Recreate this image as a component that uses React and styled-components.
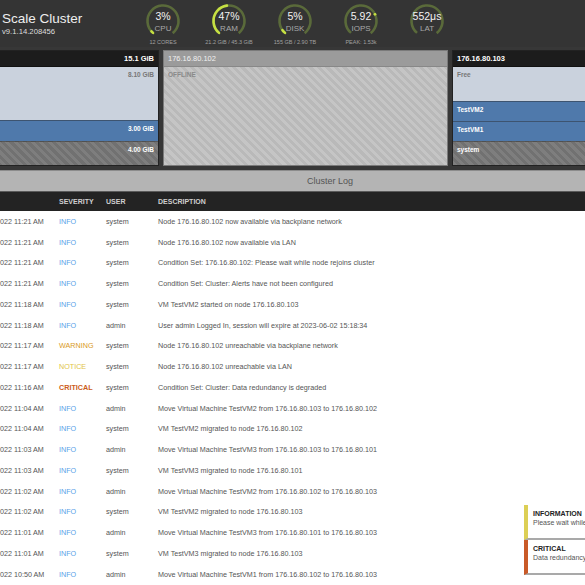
import React from "react";
import styled, { createGlobalStyle } from "styled-components";

const GlobalStyle = createGlobalStyle`
  html, body {
    margin: 0;
    padding: 0;
    overflow: hidden;
    background: #fff;
  }
  body {
    font-family: "Liberation Sans", Arial, sans-serif;
  }
`;

const Page = styled.div`
  position: relative;
  width: 585px;
  height: 585px;
  overflow: hidden;
  background: #fff;
`;

/* ---------- header ---------- */

const Header = styled.header`
  display: flex;
  align-items: flex-start;
  height: 47px;
  background: #343434;
`;

const Brand = styled.div`
  width: 130px;
  padding: 11px 0 0 2px;
  box-sizing: border-box;
`;

const Title = styled.div`
  font-size: 13.5px;
  line-height: 15px;
  color: #eee;
`;

const Version = styled.div`
  font-size: 7.7px;
  line-height: 9px;
  color: #ddd;
  margin-top: 1px;
`;

const Gauge = styled.div`
  width: 66px;
  padding-top: 3px;
  display: flex;
  flex-direction: column;
  align-items: center;
`;

const Dial = styled.div`
  position: relative;
  width: 36px;
  height: 36px;
`;

const DialText = styled.div`
  position: absolute;
  inset: 0;
  display: flex;
  flex-direction: column;
  align-items: center;
  justify-content: center;
  padding-top: 1px;
`;

const Value = styled.div`
  font-size: 10.5px;
  line-height: 11px;
  color: #f2f2f2;
`;

const Unit = styled.div`
  font-size: 8px;
  line-height: 9px;
  color: #a8a8a8;
  margin-top: 2px;
`;

const SubLabel = styled.div`
  font-size: 5.5px;
  line-height: 6px;
  color: #a0a0a0;
  white-space: nowrap;
`;

const R = 15.5;
const C = 2 * Math.PI * R;
const SWEEP = 280;
const ARC = (SWEEP / 360) * C;

const GaugeRing = ({ pct, marker }) => {
  let mx, my;
  if (marker != null) {
    const a = ((130 + marker * SWEEP) * Math.PI) / 180;
    mx = 18 + R * Math.cos(a);
    my = 18 + R * Math.sin(a);
  }
  return (
    <svg width="36" height="36" viewBox="0 0 36 36">
      <circle
        cx="18"
        cy="18"
        r={R}
        fill="none"
        stroke="#5a6a3a"
        strokeWidth="2.6"
        strokeDasharray={`${ARC} ${C}`}
        transform="rotate(130 18 18)"
      />
      {pct > 0 && (
        <circle
          cx="18"
          cy="18"
          r={R}
          fill="none"
          stroke="#c6e043"
          strokeWidth="2.6"
          strokeLinecap="round"
          strokeDasharray={`${Math.max(pct * ARC, 0.5)} ${C}`}
          transform="rotate(130 18 18)"
        />
      )}
      {marker != null && <circle cx={mx} cy={my} r="1.4" fill="#c6e043" />}
    </svg>
  );
};

const gauges = [
  { value: "3%", unit: "CPU", sub: "12 CORES", pct: 0.03 },
  { value: "47%", unit: "RAM", sub: "21.2 GiB / 45.3 GiB", pct: 0.47 },
  { value: "5%", unit: "DISK", sub: "155 GB / 2.90 TB", pct: 0.05 },
  { value: "5.92", unit: "IOPS", sub: "PEAK: 1.53k", pct: 0, marker: 0.73 },
  { value: "552μs", unit: "LAT", sub: "", pct: 0 },
];

/* ---------- nodes ---------- */

const Nodes = styled.section`
  display: flex;
  gap: 4px;
  margin-left: -129px;
  width: 870px;
  height: 123px;
  padding: 3px 3px 4px;
  box-sizing: border-box;
  background: #373737;
`;

const Node = styled.div`
  width: 285px;
  flex: none;
  display: flex;
  flex-direction: column;
  border: 1px solid ${(p) => (p.$offline ? "#7a7a7a" : "#222")};
  box-sizing: border-box;
`;

const NodeHead = styled.div`
  height: 15px;
  display: flex;
  align-items: center;
  justify-content: ${(p) => (p.$right ? "flex-end" : "flex-start")};
  padding: 0 4px;
  background: ${(p) => (p.$offline ? "#9b9b9b" : "#1c1c1c")};
  color: ${(p) => (p.$offline ? "#f0f0f0" : "#fff")};
  font-size: 7.5px;
  font-weight: ${(p) => (p.$offline ? "normal" : "bold")};
  border-bottom: 1px solid ${(p) => (p.$offline ? "#888" : "#111")};
`;

const NodeBody = styled.div`
  flex: 1;
  display: flex;
  flex-direction: column;
`;

const segColors = {
  free: { bg: "#cad2dd", fg: "#777" },
  vm: { bg: "#4f79ab", fg: "#fff" },
  system: {
    bg: "repeating-linear-gradient(45deg, #7e7e7e 0 3px, #717171 3px 6px)",
    fg: "#fff",
  },
  offline: {
    bg: "repeating-linear-gradient(45deg, #c5c5c5 0 3px, #b9b9b9 3px 6px)",
    fg: "#8a8a8a",
  },
};

const Segment = styled.div`
  height: ${(p) => p.$h}px;
  flex: ${(p) => (p.$grow ? 1 : "none")};
  box-sizing: border-box;
  background: ${(p) => segColors[p.$kind].bg};
  color: ${(p) => segColors[p.$kind].fg};
  border-top: ${(p) => (p.$first ? "none" : "1px solid rgba(40,40,40,0.45)")};
  font-size: 6.5px;
  font-weight: bold;
  padding: 4px 4px 0;
  text-align: ${(p) => (p.$right ? "right" : "left")};
`;

/* ---------- log ---------- */

const Log = styled.section`
  margin-left: -100px;
  width: 860px;
`;

const LogBar = styled.div`
  height: 22px;
  box-sizing: border-box;
  background: #b4b4b4;
  border-top: 1px solid #8c8c8c;
  border-bottom: 1px solid #5a5a5a;
  display: flex;
  align-items: center;
  justify-content: center;
  font-size: 9px;
  color: #555;
`;

const Row = styled.div`
  display: grid;
  grid-template-columns: 75px 47px 52px 1fr;
  align-items: center;
  padding-left: 84px;
  height: ${(p) => (p.$head ? "19px" : "20.75px")};
  background: ${(p) => (p.$head ? "#232323" : "#fff")};
  color: ${(p) => (p.$head ? "#cfcfcf" : "#555")};
  font-size: ${(p) => (p.$head ? "7px" : "7.2px")};
  font-weight: ${(p) => (p.$head ? "bold" : "normal")};
  white-space: nowrap;
`;

const sevColors = {
  INFO: "#5a9fe8",
  WARNING: "#d99a1c",
  NOTICE: "#e2c446",
  CRITICAL: "#cc5c20",
};

const Severity = styled.span`
  color: ${(p) => sevColors[p.$level]};
  font-weight: ${(p) => (p.$level === "CRITICAL" ? "bold" : "normal")};
`;

const logs = [
  ["11:21 AM", "INFO", "system", "Node 176.16.80.102 now available via backplane network"],
  ["11:21 AM", "INFO", "system", "Node 176.16.80.102 now available via LAN"],
  ["11:21 AM", "INFO", "system", "Condition Set: 176.16.80.102: Please wait while node rejoins cluster"],
  ["11:21 AM", "INFO", "system", "Condition Set: Cluster: Alerts have not been configured"],
  ["11:18 AM", "INFO", "system", "VM TestVM2 started on node 176.16.80.103"],
  ["11:18 AM", "INFO", "admin", "User admin Logged In, session will expire at 2023-06-02 15:18:34"],
  ["11:17 AM", "WARNING", "system", "Node 176.16.80.102 unreachable via backplane network"],
  ["11:17 AM", "NOTICE", "system", "Node 176.16.80.102 unreachable via LAN"],
  ["11:16 AM", "CRITICAL", "system", "Condition Set: Cluster: Data redundancy is degraded"],
  ["11:04 AM", "INFO", "admin", "Move Virtual Machine TestVM2 from 176.16.80.103 to 176.16.80.102"],
  ["11:04 AM", "INFO", "system", "VM TestVM2 migrated to node 176.16.80.102"],
  ["11:03 AM", "INFO", "admin", "Move Virtual Machine TestVM3 from 176.16.80.103 to 176.16.80.101"],
  ["11:03 AM", "INFO", "system", "VM TestVM3 migrated to node 176.16.80.101"],
  ["11:02 AM", "INFO", "admin", "Move Virtual Machine TestVM2 from 176.16.80.102 to 176.16.80.103"],
  ["11:02 AM", "INFO", "system", "VM TestVM2 migrated to node 176.16.80.103"],
  ["11:01 AM", "INFO", "admin", "Move Virtual Machine TestVM3 from 176.16.80.101 to 176.16.80.103"],
  ["11:01 AM", "INFO", "system", "VM TestVM3 migrated to node 176.16.80.103"],
  ["10:50 AM", "INFO", "admin", "Move Virtual Machine TestVM1 from 176.16.80.102 to 176.16.80.103"],
];

/* ---------- notifications ---------- */

const Toasts = styled.div`
  position: absolute;
  left: 524px;
  top: 505px;
  width: 200px;
  background: #fff;
`;

const Toast = styled.div`
  height: 35px;
  box-sizing: border-box;
  border-left: 4px solid ${(p) => p.$color};
  border-bottom: 2px solid #a9a9a9;
  padding: 3.5px 0 0 5px;
  font-size: 7px;
  line-height: 9px;
  white-space: nowrap;
`;

const ToastTitle = styled.div`
  font-weight: bold;
  color: #222;
`;

const ToastText = styled.div`
  color: #555;
`;

export default function App() {
  return (
    <Page>
      <GlobalStyle />
      <Header>
        <Brand>
          <Title>Scale Cluster</Title>
          <Version>v9.1.14.208456</Version>
        </Brand>
        {gauges.map((g) => (
          <Gauge key={g.unit}>
            <Dial>
              <GaugeRing pct={g.pct} marker={g.marker} />
              <DialText>
                <Value>{g.value}</Value>
                <Unit>{g.unit}</Unit>
              </DialText>
            </Dial>
            <SubLabel>{g.sub}</SubLabel>
          </Gauge>
        ))}
      </Header>

      <Nodes>
        <Node>
          <NodeHead $right>15.1 GiB</NodeHead>
          <NodeBody>
            <Segment $kind="free" $h={53} $first $right>8.10 GiB</Segment>
            <Segment $kind="vm" $h={21} $right>3.00 GiB</Segment>
            <Segment $kind="system" $grow $right>4.00 GiB</Segment>
          </NodeBody>
        </Node>
        <Node $offline>
          <NodeHead $offline>176.16.80.102</NodeHead>
          <NodeBody>
            <Segment $kind="offline" $grow $first>OFFLINE</Segment>
          </NodeBody>
        </Node>
        <Node>
          <NodeHead>176.16.80.103</NodeHead>
          <NodeBody>
            <Segment $kind="free" $h={34} $first>Free</Segment>
            <Segment $kind="vm" $h={20}>TestVM2</Segment>
            <Segment $kind="vm" $h={20}>TestVM1</Segment>
            <Segment $kind="system" $grow>system</Segment>
          </NodeBody>
        </Node>
      </Nodes>

      <Log>
        <LogBar>Cluster Log</LogBar>
        <Row $head>
          <span />
          <span>SEVERITY</span>
          <span>USER</span>
          <span>DESCRIPTION</span>
        </Row>
        {logs.map(([time, level, user, desc], i) => (
          <Row key={i}>
            <span>6/2/2022 {time}</span>
            <Severity $level={level}>{level}</Severity>
            <span>{user}</span>
            <span>{desc}</span>
          </Row>
        ))}
      </Log>

      <Toasts>
        <Toast $color="#dccf55">
          <ToastTitle>INFORMATION</ToastTitle>
          <ToastText>Please wait while node rejoins cluster</ToastText>
        </Toast>
        <Toast $color="#c95a28">
          <ToastTitle>CRITICAL</ToastTitle>
          <ToastText>Data redundancy is degraded</ToastText>
        </Toast>
      </Toasts>
    </Page>
  );
}
